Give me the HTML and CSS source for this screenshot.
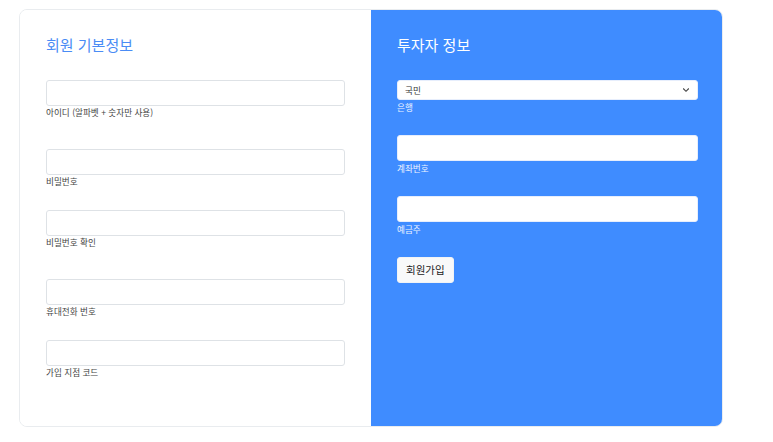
FILE: index.html
```html
<!DOCTYPE html>
<html lang="ko">
<head>
<meta charset="utf-8">
<title>회원가입</title>
<link rel="stylesheet" href="styles.css">
</head>
<body>
<div class="card">
  <section class="panel panel-basic">
    <h2 class="title title-basic">회원 기본정보</h2>
    <div class="group gap-wide">
      <input class="field" type="text">
      <label class="label">아이디 (알파벳 + 숫자만 사용)</label>
    </div>
    <div class="group gap-narrow">
      <input class="field" type="password">
      <label class="label">비밀번호</label>
    </div>
    <div class="group gap-wide">
      <input class="field" type="password">
      <label class="label">비밀번호 확인</label>
    </div>
    <div class="group gap-narrow">
      <input class="field" type="text">
      <label class="label">휴대전화 번호</label>
    </div>
    <div class="group">
      <input class="field" type="text">
      <label class="label">가입 지점 코드</label>
    </div>
  </section>
  <section class="panel panel-investor">
    <h2 class="title title-investor">투자자 정보</h2>
    <div class="group gap-blue">
      <div class="select-wrap">
        <select class="select">
          <option>국민</option>
        </select>
        <svg class="chevron" width="8" height="6" viewBox="0 0 8 6"><path d="M1.2 1.5 L4 4.3 L6.8 1.5" fill="none" stroke="#444" stroke-width="1.1"/></svg>
      </div>
      <label class="label label-light">은행</label>
    </div>
    <div class="group gap-blue">
      <input class="field field-white" type="text">
      <label class="label label-light">계좌번호</label>
    </div>
    <div class="group gap-blue">
      <input class="field field-white" type="text">
      <label class="label label-light">예금주</label>
    </div>
    <button class="btn" type="button">회원가입</button>
  </section>
</div>
</body>
</html>
```

FILE: styles.css
```css
* { box-sizing: border-box; }
html, body { background: #fff; }
body {
  margin: 0;
  padding: 9px 0 0 19px;
  font-family: "Noto Sans CJK KR", "Noto Sans", sans-serif;
}
.card {
  width: 704px;
  height: 418px;
  border: 1px solid #e9ecef;
  border-radius: 8px;
  overflow: hidden;
  display: grid;
  grid-template-columns: 351px 352px;
}
.panel {
  display: flex;
  flex-direction: column;
  align-items: flex-start;
  padding: 25px 26px 0 26px;
}
.panel-basic { background: #fff; }
.panel-investor {
  background: #3f8cff;
  margin-top: -1px;
  margin-bottom: -1px;
  padding-top: 26px;
  padding-right: 25px;
  border-radius: 0 8px 8px 0;
}
.title {
  margin: 0 0 26px 0;
  font-size: 15px;
  font-weight: 400;
  line-height: 19px;
}
.title-basic { color: #4a8cf5; }
.title-investor { color: #fff; }
.group {
  display: flex;
  flex-direction: column;
  width: 100%;
}
.gap-wide { margin-bottom: 30px; }
.gap-narrow { margin-bottom: 22px; }
.gap-blue { margin-bottom: 21px; }
.field {
  display: block;
  width: 100%;
  height: 26px;
  margin: 0;
  border: 1px solid #dee2e6;
  border-radius: 3px;
  background: #fff;
  padding: 0 8px;
  font: inherit;
}
.field-white { border-color: #e7eefc; }
.label {
  font-size: 8.6px;
  line-height: 13px;
  color: #444;
}
.label-light {
  color: #eef3ff;
  margin-top: 1px;
}
.select-wrap {
  position: relative;
  width: 100%;
  height: 20px;
}
.select {
  display: block;
  appearance: none;
  -webkit-appearance: none;
  width: 100%;
  height: 20px;
  margin: 0;
  border: 1px solid #e7eefc;
  border-radius: 3px;
  background: #fff;
  padding: 0 7px;
  font-family: inherit;
  font-size: 8.6px;
  line-height: 18px;
  color: #333;
}
.chevron {
  position: absolute;
  right: 8px;
  top: 7px;
  pointer-events: none;
}
.btn {
  height: 26px;
  padding: 0 8px;
  border: 1px solid #f1f3f5;
  border-radius: 3px;
  background: #f8f9fa;
  color: #222;
  font-family: inherit;
  font-size: 10.5px;
  line-height: 24px;
}
```
